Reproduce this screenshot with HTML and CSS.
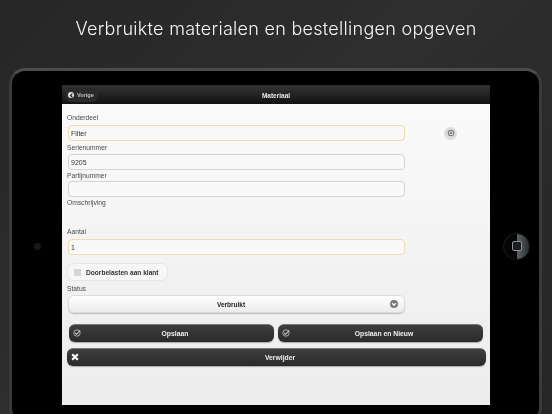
FILE: index.html
```html
<!DOCTYPE html>
<html lang="nl">
<head>
<meta charset="utf-8">
<title>Materiaal</title>
<link rel="stylesheet" href="styles.css">
</head>
<body>
<div class="page">
  <h1 class="headline">Verbruikte materialen en bestellingen opgeven</h1>
  <div class="tablet">
    <div class="bezel bezel-left"><span class="camera"></span></div>
    <main class="screen">
      <header class="topbar">
        <button class="back"><span class="back-dot"><svg viewBox="0 0 8 8" width="5" height="5"><path d="M5.4 1 2.4 4l3 3" fill="none" stroke="#222" stroke-width="2"/></svg></span>Vorige</button>
        <span class="topbar-title">Materiaal</span>
      </header>
      <form class="form">
        <div class="label first">Onderdeel</div>
        <div class="field-row">
          <div class="input active">Filter</div>
          <span class="search"><svg viewBox="0 0 12 12" width="8" height="8"><circle cx="6" cy="6" r="5" fill="#808080"/><circle cx="6" cy="6" r="2.6" fill="none" stroke="#eee" stroke-width="1.2"/><path d="M7.5 7.8 9 9" stroke="#eee" stroke-width="1.2"/></svg></span>
        </div>
        <div class="label l-serie">Serienummer</div>
        <div class="input">9205</div>
        <div class="label l-partij">Partijnummer</div>
        <div class="input"></div>
        <div class="label l-omschr">Omschrijving</div>
        <div class="label l-aantal">Aantal</div>
        <div class="input active">1</div>
        <div class="checkbox"><span class="box"></span>Doorbelasten aan klant</div>
        <div class="label l-status">Status</div>
        <div class="select">Verbruikt<span class="chevron"><svg viewBox="0 0 10 10" width="8" height="8"><circle cx="5" cy="5" r="5" fill="#777"/><path d="M2.6 4 5 6.6 7.4 4" fill="none" stroke="#fff" stroke-width="1.6"/></svg></span></div>
        <div class="actions">
          <button class="btn"><svg class="btn-icon" viewBox="0 0 10 10" width="8" height="8"><circle cx="5" cy="5" r="4" fill="none" stroke="#bbb" stroke-width="1.1"/><path d="M2.8 4.8 4.6 6.6 9 1.8" fill="none" stroke="#ccc" stroke-width="1.3"/></svg>Opslaan</button>
          <button class="btn"><svg class="btn-icon" viewBox="0 0 10 10" width="8" height="8"><circle cx="5" cy="5" r="4" fill="none" stroke="#bbb" stroke-width="1.1"/><path d="M2.8 4.8 4.6 6.6 9 1.8" fill="none" stroke="#ccc" stroke-width="1.3"/></svg>Opslaan en Nieuw</button>
        </div>
        <button class="btn btn-wide"><svg class="btn-icon" viewBox="0 0 10 10" width="8" height="8"><path d="M1.5 1.5 8.5 8.5M8.5 1.5 1.5 8.5" stroke="#fff" stroke-width="2.8"/></svg>Verwijder</button>
      </form>
    </main>
    <div class="bezel bezel-right"><span class="home"><span class="home-square"></span></span></div>
  </div>
</div>
</body>
</html>
```

FILE: styles.css
```css
* { box-sizing: border-box; }
html, body { margin: 0; padding: 0; height: 100%; overflow: hidden; }
body { background: #2a2a2a; font-family: "Liberation Sans", Arial, sans-serif; }
.page { width: 552px; height: 414px; overflow: hidden; background: linear-gradient(135deg, #262626, #2e2e2e 45%, #262626); filter: blur(0.35px); }
.headline { margin: 0; height: 68px; padding-top: 17px; text-align: center; font: 300 18px/24px "Inter", sans-serif; color: #f6f6f6; letter-spacing: 0.28px; white-space: nowrap; }
.tablet { display: flex; margin-left: 9px; width: 533px; height: 356px; background: #000; border: 3px solid #3a3a3a; border-top-color: #4c4c4c; border-radius: 16px; padding: 14px 0 0; }
.bezel { display: flex; align-items: center; justify-content: center; padding-top: 2px; height: 320px; }
.bezel-left { width: 50px; }
.bezel-right { width: 49px; padding-left: 4px; }
.camera { width: 7px; height: 7px; border-radius: 50%; background: #16181a; }
.home { display: flex; align-items: center; justify-content: center; width: 27px; height: 27px; border-radius: 50%; background: linear-gradient(90deg, #050505 50%, #5a6468 52%, #2a2e30); border: 1px solid #1c1c1c; }
.home-square { width: 10px; height: 10px; border: 1px solid #8c9194; border-radius: 2px; background: #1a1c1d; }
.screen { width: 428px; height: 320px; display: flex; flex-direction: column; background: linear-gradient(#fbfbfb, #ececec); }
.topbar { position: relative; flex: none; height: 19px; display: flex; align-items: center; justify-content: center; background: linear-gradient(#333, #111); border-top: 1px solid #2c2c2c; }
.topbar-title { font-size: 6.5px; font-weight: bold; color: #e8e8e8; }
.back { position: absolute; left: 3px; top: 2px; display: flex; align-items: center; gap: 3px; height: 14px; width: 33px; padding: 0 0 0 3px; border: 0; border-radius: 7px; background: #2a2a2a; font: bold 5.5px "Liberation Sans", sans-serif; color: #c4c4c4; }
.back-dot { display: flex; align-items: center; justify-content: center; width: 6px; height: 6px; border-radius: 50%; background: #e8e8e8; }
.form { display: flex; flex-direction: column; padding: 0 0 0 5px; font-size: 7px; color: #333; }
.label { font-size: 6.7px; line-height: 8px; color: #4c4c4c; }
.first { margin-top: 10px; margin-bottom: 3px; }
.l-serie { margin-top: 3px; margin-bottom: 2px; }
.l-partij { margin-top: 2px; margin-bottom: 1px; }
.l-omschr { margin-top: 2px; }
.l-aantal { margin-top: 21px; margin-bottom: 3px; }
.l-status { margin-top: 4px; margin-bottom: 2px; }
.field-row { display: flex; align-items: center; }
.input { flex: none; width: 337px; height: 16px; margin-left: 1px; padding-left: 2px; display: flex; align-items: center; background: #f9f9f9; border: 1px solid #d4d4d4; border-radius: 4px; font-size: 7px; color: #333; }
.active { border-color: #f0dcae; }
.search { display: flex; align-items: center; justify-content: center; width: 13px; height: 13px; margin-left: 39px; border-radius: 50%; background: #dcdcdc; }
.checkbox { display: flex; align-items: center; gap: 5px; margin: 8px 0 0; width: 101px; height: 18px; padding-left: 6px; background: #f7f7f7; border: 1px solid #e6e6e6; border-radius: 7px; font-size: 6.6px; font-weight: bold; color: #333; white-space: nowrap; }
.box { width: 7px; height: 7px; background: #d6d6d6; }
.select { position: relative; margin-left: 1px; width: 337px; height: 18px; padding-right: 11px; display: flex; align-items: center; justify-content: center; background: linear-gradient(#fff, #ececec); border: 1px solid #dcdcdc; border-radius: 6px; box-shadow: 0 1px 1px #bbb; font-size: 6.5px; font-weight: bold; color: #222; }
.chevron { position: absolute; right: 6px; top: 4px; display: flex; }
.actions { display: flex; gap: 4px; margin: 11px 0 0 2px; }
.btn { position: relative; display: flex; align-items: center; justify-content: center; width: 205px; height: 18px; padding: 0 0 0 7px; border: 0; border-top: 1px solid #777; border-radius: 6px; background: linear-gradient(#3e3e3e, #2a2a2a); box-shadow: 0 1px 1px #aaa; font: bold 6.8px "Liberation Sans", sans-serif; color: #eee; }
.btn-icon { position: absolute; left: 4px; top: 4px; }
.btn-wide { width: 419px; margin-top: 6px; }
```
